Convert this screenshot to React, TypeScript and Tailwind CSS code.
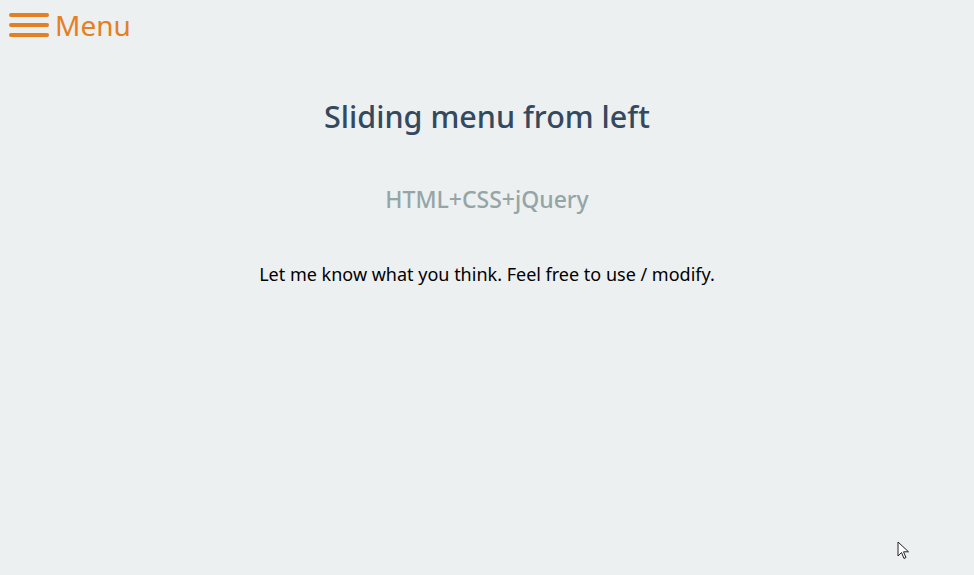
import React from 'react';

export default function App() {
  return (
    <div
      className="relative w-full h-[575px] bg-[#ecf0f1] overflow-hidden"
      style={{ fontFamily: '"Noto Sans", "Open Sans", sans-serif' }}
    >
      {/* Menu toggle */}
      <div className="flex items-center gap-[6px] pl-[9px] pt-[8px] text-[#e67e22]">
        <div className="flex flex-col gap-[6px] w-[40px]">
          <span className="block h-[4px] rounded-full bg-[#e67e22]" />
          <span className="block h-[4px] rounded-full bg-[#e67e22]" />
          <span className="block h-[4px] rounded-full bg-[#e67e22]" />
        </div>
        <span className="text-[28px] leading-[34px]">Menu</span>
      </div>

      {/* Content */}
      <div className="flex flex-col items-center text-center">
        <h1 className="mt-[54px] text-[30.5px] leading-[40px] font-medium text-[#34495e]">
          Sliding menu from left
        </h1>
        <h2 className="mt-[48px] text-[23px] leading-[30px] font-medium text-[#95a5a6]">
          HTML+CSS+jQuery
        </h2>
        <p className="mt-[48px] text-[18px] leading-[24px] text-black">
          Let me know what you think. Feel free to use / modify.
        </p>
      </div>

      {/* Mouse pointer */}
      <svg
        className="absolute left-[897px] top-[541px]"
        width="13"
        height="20"
        viewBox="0 0 13 20"
      >
        <path
          d="M1 1 L1 15 L4.5 11.5 L7 17.5 L9 16.5 L6.5 10.8 L11.5 10.8 Z"
          fill="#fff"
          stroke="#222"
          strokeWidth="1"
          strokeLinejoin="round"
        />
      </svg>
    </div>
  );
}
